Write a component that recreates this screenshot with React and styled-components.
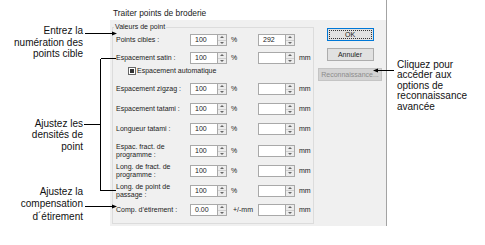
import React from 'react';
import styled, { createGlobalStyle } from 'styled-components';

const Global = createGlobalStyle`
  html, body { margin: 0; padding: 0; background: #fff; }
`;

const rows = [
  { label: ['Points cibles :'], value: '100', unit: '%', second: '292', mm: false, mt: 0 },
  { label: ['Espacement satin :'], value: '100', unit: '%', second: '', mm: true, mt: 0 },
  { check: true, mt: -1 },
  { label: ['Espacement zigzag :'], value: '100', unit: '%', second: '', mm: true, mt: 4 },
  { label: ['Espacement tatami :'], value: '100', unit: '%', second: '', mm: true, mt: 2 },
  { label: ['Longueur tatami :'], value: '100', unit: '%', second: '', mm: true, mt: 2 },
  { label: ['Espac. fract. de', 'programme :'], value: '100', unit: '%', second: '', mm: true, mt: 4 },
  { label: ['Long. de fract. de', 'programme :'], value: '100', unit: '%', second: '', mm: true, mt: 1.5 },
  { label: ['Long. de point de', 'passage :'], value: '100', unit: '%', second: '', mm: true, mt: 2 },
  { label: ["Comp. d\u2019\u00e9tirement :"], value: '0.00', unit: '+/-mm', second: '', mm: true, mt: 1.5 },
];

const Spin = ({ value }) => (
  <SpinBox>
    <Field>{value}</Field>
    <Spinner>
      <SpinHalf>
        <svg width="4" height="2" viewBox="0 0 4 2"><polygon points="0,2 4,2 2,0" fill="#666" /></svg>
      </SpinHalf>
      <SpinHalf>
        <svg width="4" height="2" viewBox="0 0 4 2"><polygon points="0,0 4,0 2,2" fill="#666" /></svg>
      </SpinHalf>
    </Spinner>
  </SpinBox>
);

const App = () => {
  return (
    <Page>
      <Global />
      <LeftNotes>
        <Note $top={25.2} $lh={11.6}>Entrez la<br />numération des<br />points cible</Note>
        <Note $top={58} $lh={11.5}>Ajustez les<br />densités de<br />point</Note>
        <Note $top={33.5} $lh={12.3}>Ajustez la<br />compensation<br />d´étirement</Note>
      </LeftNotes>

      <Dialog>
        <TitleBar>Traiter points de broderie</TitleBar>
        <Body>
          <Group>
            <Legend>Valeurs de point</Legend>
            {rows.map((r, i) =>
              r.check ? (
                <CheckRow key={i} $mt={r.mt}>
                  <CheckBox><CheckFill /></CheckBox>
                  Espacement automatique
                </CheckRow>
              ) : (
                <Row key={i} $mt={r.mt}>
                  <Label>{r.label.map((l, j) => <div key={j}>{l}</div>)}</Label>
                  <Spin value={r.value} />
                  <Unit $wide={r.unit !== '%'}>{r.unit}</Unit>
                  <Spin value={r.second} />
                  <Unit>{r.mm ? 'mm' : ''}</Unit>
                </Row>
              )
            )}
          </Group>
          <ButtonCol>
            <Button $w={47} $default>OK</Button>
            <Button $w={47}>Annuler</Button>
            <Button $w={64} $disabled>Reconnaissance...</Button>
          </ButtonCol>
        </Body>
      </Dialog>

      <RightNotes>
        <Note $top={59.7} $lh={10.6} $align="left">
          Cliquez pour<br />accéder aux<br />options de<br />reconnaissance<br />avancée
        </Note>
      </RightNotes>

      <Callouts width="485" height="245" viewBox="0 0 485 245">
        <g stroke="#000" strokeWidth="1" fill="none" shapeRendering="crispEdges">
          <path d="M85 33.5 H113" />
          <path d="M84 124.5 H100.5 M100.5 58.5 V190.5 M100.5 58.5 H116 M100.5 190.5 H116" />
          <path d="M85 206.5 H113" />
          <path d="M394 70.5 H377" />
        </g>
        <g fill="#000">
          <polygon points="117,33.5 112,31.5 112,35.5" />
          <polygon points="117,206.5 112,204.5 112,208.5" />
          <polygon points="373,70.5 378,68.5 378,72.5" />
        </g>
      </Callouts>
    </Page>
  );
};

const Page = styled.div`
  position: relative;
  width: 485px;
  height: 245px;
  display: flex;
  align-items: flex-start;
  background: #fff;
  overflow: hidden;
`;

const LeftNotes = styled.div`
  width: 110px;
  flex-shrink: 0;
  display: flex;
  flex-direction: column;
  align-items: flex-end;
  padding-right: 27px;
  box-sizing: border-box;
`;

const RightNotes = styled.div`
  flex: 1;
  padding-left: 10px;
`;

const Note = styled.div`
  margin-top: ${p => p.$top}px;
  font-family: "Liberation Sans", Arial, sans-serif;
  font-size: 10px;
  line-height: ${p => p.$lh}px;
  text-align: ${p => p.$align || 'right'};
  color: #111;
  white-space: nowrap;
`;

const Dialog = styled.div`
  width: 277px;
  height: 226px;
  flex-shrink: 0;
  box-sizing: border-box;
  border-right: 1px solid #a3a3a3;
  display: flex;
  flex-direction: column;
  font-family: "Liberation Sans", Tahoma, sans-serif;
  color: #1b1b1b;
`;

const TitleBar = styled.div`
  height: 20px;
  box-sizing: border-box;
  padding: 8px 0 0 3px;
  font-size: 8.4px;
  line-height: 10px;
  background: #fff;
`;

const Body = styled.div`
  flex: 1;
  display: flex;
  background: #f0f0f0;
  padding: 3px 0 2px 2px;
  min-height: 0;
`;

const Group = styled.fieldset`
  margin: 0;
  width: 202px;
  min-width: 0;
  box-sizing: border-box;
  border: 1px solid #dcdcdc;
  padding: 0 0 0 3px;
`;

const Legend = styled.legend`
  font-size: 7px;
  line-height: 8px;
  padding: 0 1px;
  margin-left: -2px;
`;

const Row = styled.div`
  display: grid;
  grid-template-columns: 74px 37px 31px 37px auto;
  align-items: center;
  height: 18px;
  margin-top: ${p => p.$mt}px;
  font-size: 7px;
  line-height: 8px;
`;

const Label = styled.div`
  white-space: nowrap;
`;

const Unit = styled.div`
  padding-left: ${p => (p.$wide ? 6 : 4)}px;
  white-space: nowrap;
`;

const CheckRow = styled.div`
  display: flex;
  align-items: center;
  height: 10px;
  margin-top: ${p => p.$mt}px;
  padding-left: 12px;
  font-size: 7px;
  line-height: 8px;
  white-space: nowrap;
`;

const CheckBox = styled.div`
  width: 8px;
  height: 8px;
  box-sizing: border-box;
  border: 1px solid #666;
  background: #fff;
  display: flex;
  align-items: center;
  justify-content: center;
  margin-right: 1px;
`;

const CheckFill = styled.div`
  width: 4px;
  height: 4px;
  background: #333;
`;

const SpinBox = styled.div`
  display: flex;
  height: 12px;
`;

const Field = styled.div`
  width: 27px;
  box-sizing: border-box;
  border: 1px solid #a9a9a9;
  border-right: none;
  background: #fff;
  padding-left: 4px;
  font-size: 7px;
  line-height: 10px;
`;

const Spinner = styled.div`
  width: 10px;
  box-sizing: border-box;
  border: 1px solid #a9a9a9;
  background: #ececec;
  display: flex;
  flex-direction: column;
`;

const SpinHalf = styled.div`
  flex: 1;
  display: flex;
  align-items: center;
  justify-content: center;
  & + & {
    border-top: 1px solid #cfcfcf;
  }
`;

const ButtonCol = styled.div`
  flex: 1;
  display: flex;
  flex-direction: column;
  align-items: center;
  gap: 7px;
  padding-top: 5px;
`;

const Button = styled.div`
  width: ${p => p.$w}px;
  height: 13px;
  box-sizing: border-box;
  border: 1px solid ${p => (p.$default ? '#0078d7' : p.$disabled ? '#c4c4c4' : '#adadad')};
  background: ${p => (p.$disabled ? '#d3d3d3' : '#e1e1e1')};
  color: ${p => (p.$disabled ? '#8c8c8c' : '#1b1b1b')};
  font-size: 7px;
  display: flex;
  align-items: center;
  justify-content: center;
  white-space: nowrap;
  outline: ${p => (p.$default ? '1px dotted #333' : 'none')};
  outline-offset: -3px;
`;

const Callouts = styled.svg`
  position: absolute;
  left: 0;
  top: 0;
  pointer-events: none;
`;

export default App;
